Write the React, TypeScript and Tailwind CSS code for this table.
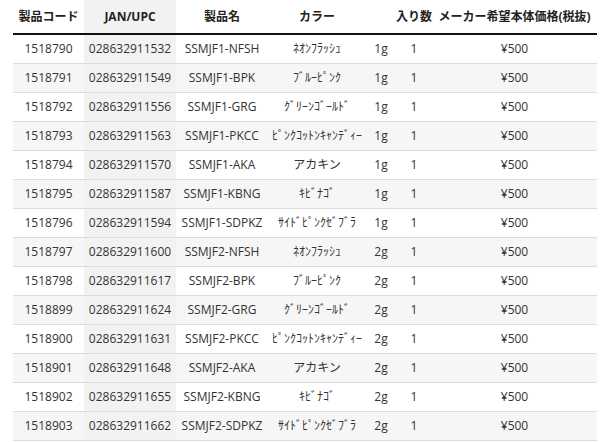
import React from "react";

const rows: [string, string, string, string, string][] = [
  ["1518790", "028632911532", "SSMJF1-NFSH", "ﾈｵﾝﾌﾗｯｼｭ", "1g"],
  ["1518791", "028632911549", "SSMJF1-BPK", "ﾌﾞﾙｰﾋﾟﾝｸ", "1g"],
  ["1518792", "028632911556", "SSMJF1-GRG", "ｸﾞﾘｰﾝｺﾞｰﾙﾄﾞ", "1g"],
  ["1518793", "028632911563", "SSMJF1-PKCC", "ﾋﾟﾝｸｺｯﾄﾝｷｬﾝﾃﾞｨｰ", "1g"],
  ["1518794", "028632911570", "SSMJF1-AKA", "アカキン", "1g"],
  ["1518795", "028632911587", "SSMJF1-KBNG", "ｷﾋﾞﾅｺﾞ", "1g"],
  ["1518796", "028632911594", "SSMJF1-SDPKZ", "ｻｲﾄﾞﾋﾟﾝｸｾﾞﾌﾞﾗ", "1g"],
  ["1518797", "028632911600", "SSMJF2-NFSH", "ﾈｵﾝﾌﾗｯｼｭ", "2g"],
  ["1518798", "028632911617", "SSMJF2-BPK", "ﾌﾞﾙｰﾋﾟﾝｸ", "2g"],
  ["1518899", "028632911624", "SSMJF2-GRG", "ｸﾞﾘｰﾝｺﾞｰﾙﾄﾞ", "2g"],
  ["1518900", "028632911631", "SSMJF2-PKCC", "ﾋﾟﾝｸｺｯﾄﾝｷｬﾝﾃﾞｨｰ", "2g"],
  ["1518901", "028632911648", "SSMJF2-AKA", "アカキン", "2g"],
  ["1518902", "028632911655", "SSMJF2-KBNG", "ｷﾋﾞﾅｺﾞ", "2g"],
  ["1518903", "028632911662", "SSMJF2-SDPKZ", "ｻｲﾄﾞﾋﾟﾝｸｾﾞﾌﾞﾗ", "2g"],
];

const font = {
  fontFamily: '"Open Sans", "Noto Sans CJK JP", sans-serif',
};

export default function App() {
  return (
    <div className="w-[609px] h-[442px] bg-white overflow-hidden pl-[13px]" style={font}>
      <div className="w-[584px]">
        <div className="flex h-[35px] border-b-2 border-[#111] text-[12px] font-bold text-[#222]">
          <div className="w-[71px] flex items-center justify-center">製品コード</div>
          <div className="w-[92px] flex items-center justify-center bg-[#f2f2f2]">JAN/UPC</div>
          <div className="w-[92px] flex items-center justify-center">製品名</div>
          <div className="w-[98px] flex items-center justify-center">カラー</div>
          <div className="w-[30px]"></div>
          <div className="w-[36px] flex items-center justify-center">入り数</div>
          <div className="w-[165px] flex items-center justify-center whitespace-nowrap">メーカー希望本体価格(税抜)</div>
        </div>
        {rows.map((r, i) => (
          <div
            key={i}
            className={`flex h-[29px] border-b border-[#dcdcdc] text-[12px] text-[#333] ${i % 2 === 1 ? "bg-[#f6f6f6]" : "bg-white"}`}
          >
            <div className="w-[71px] flex items-center justify-center">{r[0]}</div>
            <div className="w-[92px] flex items-center justify-center bg-[#f2f2f2]">{r[1]}</div>
            <div className="w-[92px] flex items-center justify-center whitespace-nowrap">{r[2]}</div>
            <div className="w-[98px] flex items-center justify-center whitespace-nowrap">{r[3]}</div>
            <div className="w-[30px] flex items-center justify-center">{r[4]}</div>
            <div className="w-[36px] flex items-center justify-center">1</div>
            <div className="w-[165px] flex items-center justify-center">¥500</div>
          </div>
        ))}
      </div>
    </div>
  );
}
